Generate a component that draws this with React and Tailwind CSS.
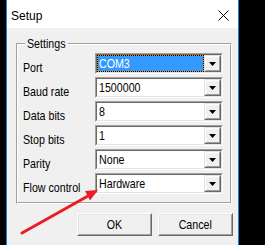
import React from "react";

const F = "font-['Liberation_Sans',Arial,sans-serif]";

function N({ children, center }) {
  return (
    <span className={`inline-block whitespace-nowrap scale-x-[0.82] ${center ? "origin-center" : "origin-left"}`}>
      {children}
    </span>
  );
}

function Arrow() {
  return (
    <div className="absolute inset-0 pointer-events-none">
      <svg width="265" height="245" viewBox="0 0 265 245">
        <line x1="22" y1="233" x2="88" y2="196" stroke="#ec1c24" strokeWidth="3" strokeLinecap="round" />
        <polygon points="98,190 90,200.5 85,191" fill="#ec1c24" />
      </svg>
    </div>
  );
}

function Combo({ value, selected }) {
  return (
    <div className="w-[128px] h-[21px] border border-t-[#a0a0a0] border-l-[#a0a0a0] border-b-white border-r-white">
      <div className="w-full h-full border border-t-[#696969] border-l-[#696969] border-b-[#e3e3e3] border-r-[#e3e3e3] bg-white flex">
        <div className="flex-1 h-full">
          {selected ? (
            <div className="w-full h-full bg-[#f39a1e]">
              <div className="w-full h-full border border-dotted border-black bg-[#3399ff] bg-clip-padding flex items-center pl-[1px] text-white text-[13px] leading-none">
                <N>{value}</N>
              </div>
            </div>
          ) : (
            <div className="w-full h-full flex items-center pl-[2px] text-black text-[13px] leading-none">
              <N>{value}</N>
            </div>
          )}
        </div>
        <div className="w-[17px] h-full border border-t-[#e3e3e3] border-l-[#e3e3e3] border-b-[#696969] border-r-[#696969]">
          <div className="w-full h-full border border-t-white border-l-white border-b-[#a0a0a0] border-r-[#a0a0a0] bg-[#f0f0f0] flex items-center justify-center">
            <svg width="7" height="4" viewBox="0 0 7 4" className="mt-[1px]">
              <polygon points="0,0 7,0 3.5,4" fill="#000" />
            </svg>
          </div>
        </div>
      </div>
    </div>
  );
}

function Row({ label, value, selected }) {
  return (
    <div className="flex items-center h-[21px]">
      <div className="w-[72px] pt-[7px] text-[13px] leading-none text-black">
        <N>{label}</N>
      </div>
      <Combo value={value} selected={selected} />
    </div>
  );
}

function Btn({ children }) {
  return (
    <div className="w-[75px] h-[23px] border border-t-white border-l-white border-b-[#696969] border-r-[#696969]">
      <div className="w-full h-full border border-t-[#e3e3e3] border-l-[#e3e3e3] border-b-[#a0a0a0] border-r-[#a0a0a0] bg-[#f0f0f0] flex items-center justify-center text-[13px] leading-none text-black">
        <N center>{children}</N>
      </div>
    </div>
  );
}

export default function App() {
  return (
    <div className={`relative w-[265px] h-[245px] bg-black overflow-hidden flex ${F}`}>
      <div className="ml-[6px] w-[233px] h-full border-x border-[#1883d7] bg-[#f0f0f0] flex flex-col">
        <div className="h-[28px] bg-white flex items-center justify-between pl-[4px] pr-[9px]">
          <span className="pt-[3px] text-[12px] leading-none text-black">Setup</span>
          <svg width="11" height="11" viewBox="0 0 11 11" className="mt-[3px]">
            <path d="M0.5 0.5 L10.5 10.5 M10.5 0.5 L0.5 10.5" stroke="#000" strokeWidth="1" />
          </svg>
        </div>
        <div className="ml-[9px] mt-[15px] w-[216px] h-[161px] relative border border-t-[#a0a0a0] border-l-[#a0a0a0] border-b-white border-r-white">
          <div className="w-full h-full border border-t-white border-l-white border-b-[#a0a0a0] border-r-[#a0a0a0] pt-[8px] pl-[5px] flex flex-col gap-[3px]">
            <Row label="Port" value="COM3" selected />
            <Row label="Baud rate" value="1500000" />
            <Row label="Data bits" value="8" />
            <Row label="Stop bits" value="1" />
            <Row label="Parity" value="None" />
            <Row label="Flow control" value="Hardware" />
          </div>
          <div className="absolute left-[8px] top-[-8px] w-[43px] pl-[2px] bg-[#f0f0f0] text-[13px] leading-[16px] text-black">
            <N>Settings</N>
          </div>
        </div>
        <div className="mt-[9px] flex justify-end gap-[6px] mr-[5px]">
          <Btn>OK</Btn>
          <Btn>Cancel</Btn>
        </div>
      </div>
      <Arrow />
    </div>
  );
}
